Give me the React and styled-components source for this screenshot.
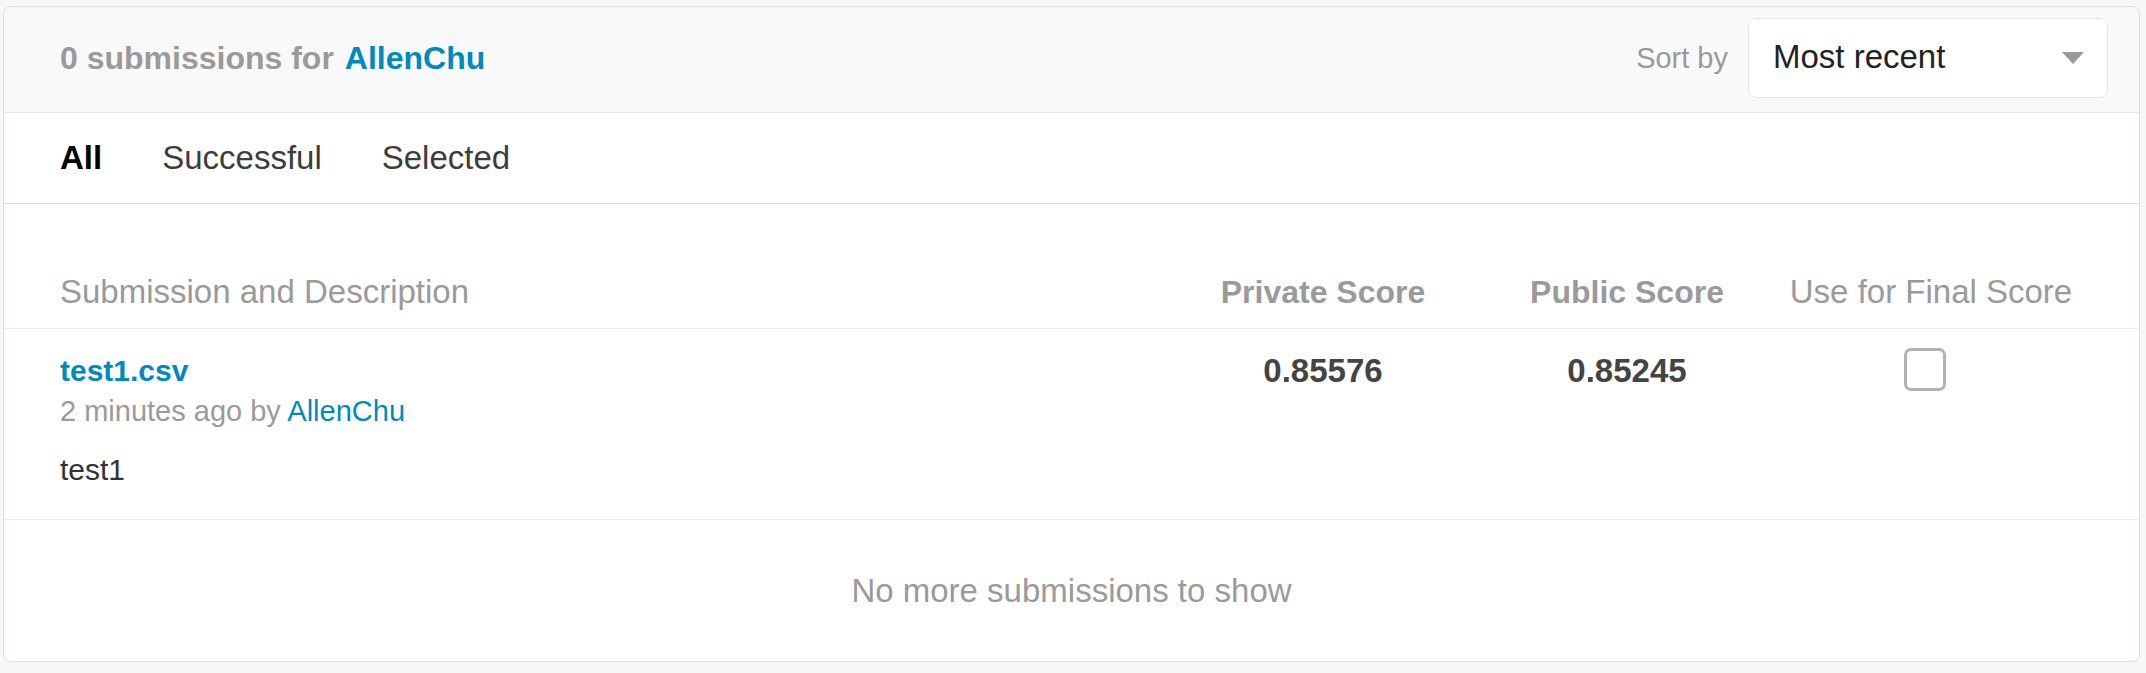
import React from "react";
import styled, { createGlobalStyle } from "styled-components";

const Global = createGlobalStyle`
  html, body { margin: 0; padding: 0; background: #f5f8f9; }
  body { font-family: "Liberation Sans", Arial, sans-serif; }
  * { box-sizing: border-box; }
`;

const Card = styled.div`
  margin: 6px 6px 10px 3px;
  background: #fff;
  border: 1px solid #dcdee0;
  border-radius: 8px;
  overflow: hidden;
`;

const Header = styled.div`
  height: 106px;
  display: flex;
  align-items: center;
  justify-content: space-between;
  padding: 0 31px 3px 56px;
  background: #f9f9f9;
  border-bottom: 1px solid #e6e6e6;
`;

const Title = styled.div`
  display: flex;
  gap: 11px;
  font-size: 32px;
  font-weight: 700;
  color: #9a9a9a;
`;

const UserLink = styled.a`
  color: #008abc;
  text-decoration: none;
  font-weight: ${(p) => (p.$bold ? 700 : 400)};
`;

const SortGroup = styled.div`
  display: flex;
  align-items: center;
  gap: 20px;
`;

const SortLabel = styled.span`
  font-size: 29px;
  color: #9a9a9a;
`;

const Select = styled.div`
  width: 360px;
  height: 80px;
  display: flex;
  align-items: center;
  justify-content: space-between;
  padding: 0 23px 3px 24px;
  background: #fff;
  border: 1px solid #e6e6e6;
  border-radius: 8px;
  font-size: 33px;
  color: #222;
`;

const Caret = styled.span`
  width: 0;
  height: 0;
  margin-top: 3px;
  border-left: 11px solid transparent;
  border-right: 11px solid transparent;
  border-top: 12px solid #999;
`;

const Tabs = styled.div`
  height: 91px;
  display: flex;
  align-items: center;
  gap: 60px;
  padding: 0 56px 1px;
  border-bottom: 1px solid #e0e0e0;
`;

const Tab = styled.span`
  font-size: 33px;
  font-weight: ${(p) => (p.$active ? 700 : 400)};
  color: ${(p) => (p.$active ? "#000" : "#3c3c3c")};
`;

const Row = styled.div`
  display: grid;
  grid-template-columns: 1fr 304px 304px 304px;
  padding: 0 56px;
  border-bottom: 1px solid #ececec;
`;

const HeadCell = styled.div`
  padding: 68px 0 16px;
  font-size: ${(p) => (p.$bold ? "32px" : "33px")};
  line-height: 40px;
  font-weight: ${(p) => (p.$bold ? 700 : 400)};
  color: #9a9a9a;
  text-align: ${(p) => (p.$center ? "center" : "left")};
  white-space: nowrap;
`;

const DescCell = styled.div`
  padding: 24px 0 31px;
  display: flex;
  flex-direction: column;
`;

const FileName = styled.a`
  font-size: 30px;
  line-height: 36px;
  font-weight: 700;
  color: #008abc;
  text-decoration: none;
`;

const Meta = styled.div`
  margin-top: 5px;
  font-size: 29px;
  line-height: 34px;
  color: #9a9a9a;
`;

const Description = styled.div`
  margin-top: 24px;
  font-size: 30px;
  line-height: 36px;
  color: #333;
`;

const ScoreCell = styled.div`
  padding-top: 24px;
  font-size: 33px;
  line-height: 36px;
  font-weight: 700;
  color: #444;
  text-align: center;
`;

const CheckCell = styled.div`
  padding-top: 19px;
  display: flex;
  justify-content: center;
  padding-right: 12px;
`;

const Checkbox = styled.span`
  width: 42px;
  height: 43px;
  border: 3px solid #b3b3b3;
  border-radius: 7px;
  background: #fff;
`;

const Footer = styled.div`
  height: 141px;
  display: flex;
  align-items: center;
  justify-content: center;
  font-size: 33px;
  color: #9a9a9a;
`;

export default function App() {
  return (
    <>
      <Global />
      <Card>
        <Header>
          <Title>
            <span>0 submissions for</span>
            <UserLink $bold>AllenChu</UserLink>
          </Title>
          <SortGroup>
            <SortLabel>Sort by</SortLabel>
            <Select>
              <span>Most recent</span>
              <Caret />
            </Select>
          </SortGroup>
        </Header>
        <Tabs>
          <Tab $active>All</Tab>
          <Tab>Successful</Tab>
          <Tab>Selected</Tab>
        </Tabs>
        <Row>
          <HeadCell>Submission and Description</HeadCell>
          <HeadCell $bold $center>Private Score</HeadCell>
          <HeadCell $bold $center>Public Score</HeadCell>
          <HeadCell $center>Use for Final Score</HeadCell>
        </Row>
        <Row>
          <DescCell>
            <FileName>test1.csv</FileName>
            <Meta>
              2 minutes ago by <UserLink>AllenChu</UserLink>
            </Meta>
            <Description>test1</Description>
          </DescCell>
          <ScoreCell>0.85576</ScoreCell>
          <ScoreCell>0.85245</ScoreCell>
          <CheckCell>
            <Checkbox />
          </CheckCell>
        </Row>
        <Footer>No more submissions to show</Footer>
      </Card>
    </>
  );
}
